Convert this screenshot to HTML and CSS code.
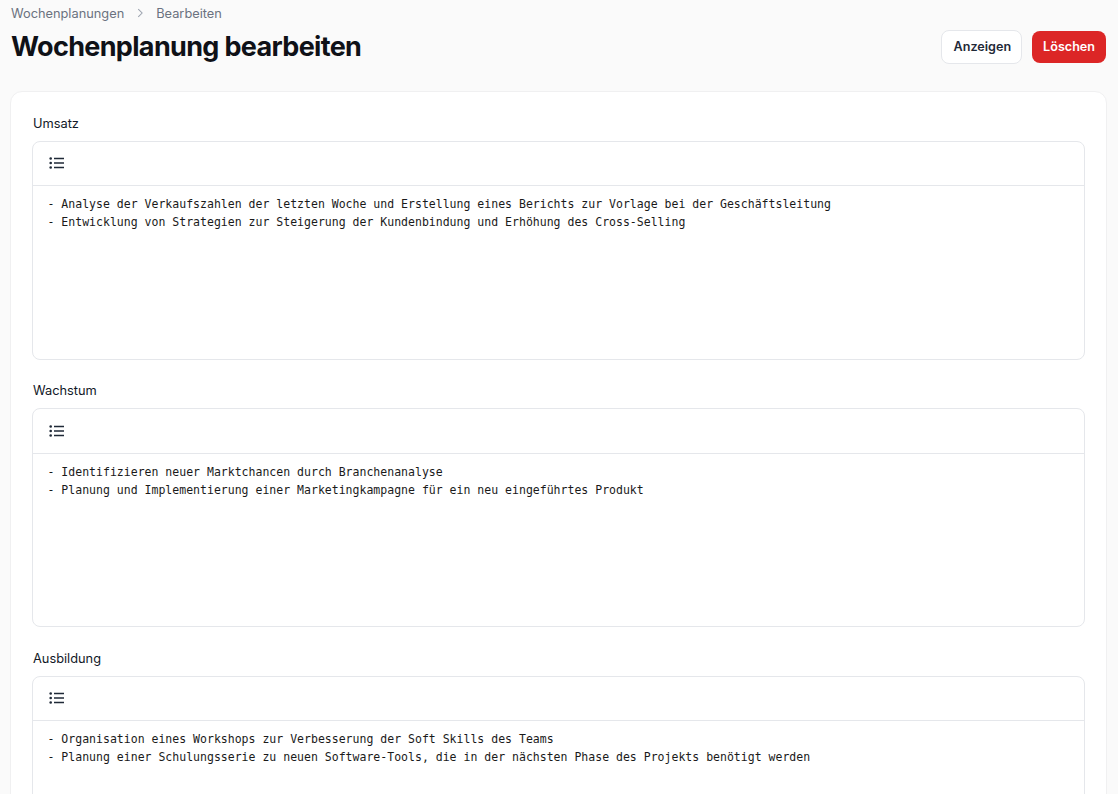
FILE: index.html
```html
<!DOCTYPE html>
<html lang="de">
<head>
<meta charset="utf-8">
<title>Wochenplanung bearbeiten</title>
<link rel="stylesheet" href="styles.css">
</head>
<body>
<main class="page">
  <nav class="crumbs">
    <span>Wochenplanungen</span>
    <svg class="chev" viewBox="0 0 20 20" width="14" height="14"><path d="M7.5 4.5 13 10l-5.500 5.500" fill="none" stroke="currentColor" stroke-width="1.500"/></svg>
    <span>Bearbeiten</span>
  </nav>
  <header class="head">
    <h1>Wochenplanung bearbeiten</h1>
    <div class="actions">
      <a class="btn btn-plain">Anzeigen</a>
      <a class="btn btn-danger">Löschen</a>
    </div>
  </header>
  <section class="panel">
    <div class="field">
      <label>Umsatz</label>
      <div class="editor">
        <div class="toolbar"><svg class="list" viewBox="0 0 16 14" width="16" height="14"><path d="M5 2.500h10M5 7h10M5 11.500h10" stroke="currentColor" stroke-width="1.600" fill="none"/><circle cx="1.700" cy="2.500" r="1.300" fill="currentColor"/><circle cx="1.700" cy="7" r="1.300" fill="currentColor"/><circle cx="1.700" cy="11.500" r="1.300" fill="currentColor"/></svg></div>
        <div class="content">- Analyse der Verkaufszahlen der letzten Woche und Erstellung eines Berichts zur Vorlage bei der Geschäftsleitung
- Entwicklung von Strategien zur Steigerung der Kundenbindung und Erhöhung des Cross-Selling</div>
      </div>
    </div>
    <div class="field">
      <label>Wachstum</label>
      <div class="editor">
        <div class="toolbar"><svg class="list" viewBox="0 0 16 14" width="16" height="14"><path d="M5 2.500h10M5 7h10M5 11.500h10" stroke="currentColor" stroke-width="1.600" fill="none"/><circle cx="1.700" cy="2.500" r="1.300" fill="currentColor"/><circle cx="1.700" cy="7" r="1.300" fill="currentColor"/><circle cx="1.700" cy="11.500" r="1.300" fill="currentColor"/></svg></div>
        <div class="content">- Identifizieren neuer Marktchancen durch Branchenanalyse
- Planung und Implementierung einer Marketingkampagne für ein neu eingeführtes Produkt</div>
      </div>
    </div>
    <div class="field">
      <label>Ausbildung</label>
      <div class="editor">
        <div class="toolbar"><svg class="list" viewBox="0 0 16 14" width="16" height="14"><path d="M5 2.500h10M5 7h10M5 11.500h10" stroke="currentColor" stroke-width="1.600" fill="none"/><circle cx="1.700" cy="2.500" r="1.300" fill="currentColor"/><circle cx="1.700" cy="7" r="1.300" fill="currentColor"/><circle cx="1.700" cy="11.500" r="1.300" fill="currentColor"/></svg></div>
        <div class="content">- Organisation eines Workshops zur Verbesserung der Soft Skills des Teams
- Planung einer Schulungsserie zu neuen Software-Tools, die in der nächsten Phase des Projekts benötigt werden</div>
      </div>
    </div>
  </section>
</main>
</body>
</html>
```
FILE: styles.css
```css
* { box-sizing: border-box; }
html, body { margin: 0; height: 794px; overflow: hidden; }
body { background: #fafafa; color: #111827; font-family: Inter, "Liberation Sans", sans-serif; }
.page { padding: 4px 11px 0 11px; }
.crumbs { display: flex; align-items: center; gap: 9px; height: 18px; font-size: 12.800px; color: #6b7280; }
.chev { color: #9ca3af; }
.head { display: flex; justify-content: space-between; align-items: flex-start; margin-top: 7px; }
h1 { margin: 0; font-size: 27px; line-height: 36px; font-weight: 700; letter-spacing: -0.660px; color: #0f1117; }
.actions { display: flex; gap: 10px; margin-top: 1px; margin-right: 1px; }
.btn { display: flex; align-items: center; justify-content: center; height: 34px; padding: 0 11px 1px; border-radius: 8px; font-size: 12.600px; font-weight: 600; }
.btn-plain { background: #fff; border: 1px solid #e5e7eb; color: #1f2937; padding-left: 12px; padding-right: 10px; }
.btn-danger { background: #dc2626; color: #fff; height: 32px; margin-top: 1px; }
.panel { margin-top: 26px; margin-left: -1px; background: #fff; border: 1px solid #f0f0f1; border-radius: 12px; padding: 22px 21px 0; display: flex; flex-direction: column; gap: 21.600px; }
.field { display: flex; flex-direction: column; gap: 7.800px; }
label { padding-left: 1px; font-size: 12.800px; line-height: 19px; font-weight: 400; color: #111827; }
.editor { height: 219px; border: 1px solid #e5e7eb; border-radius: 8px; background: #fff; }
.toolbar { height: 44.400px; border-bottom: 1px solid #e5e7eb; display: flex; align-items: center; padding-left: 16px; color: #1f2937; }
.content { padding: 9px 14.500px; font-family: "DejaVu Sans Mono", "Liberation Mono", monospace; font-size: 11.530px; line-height: 18.200px; color: #1a1a1a; white-space: pre-wrap; }
```
